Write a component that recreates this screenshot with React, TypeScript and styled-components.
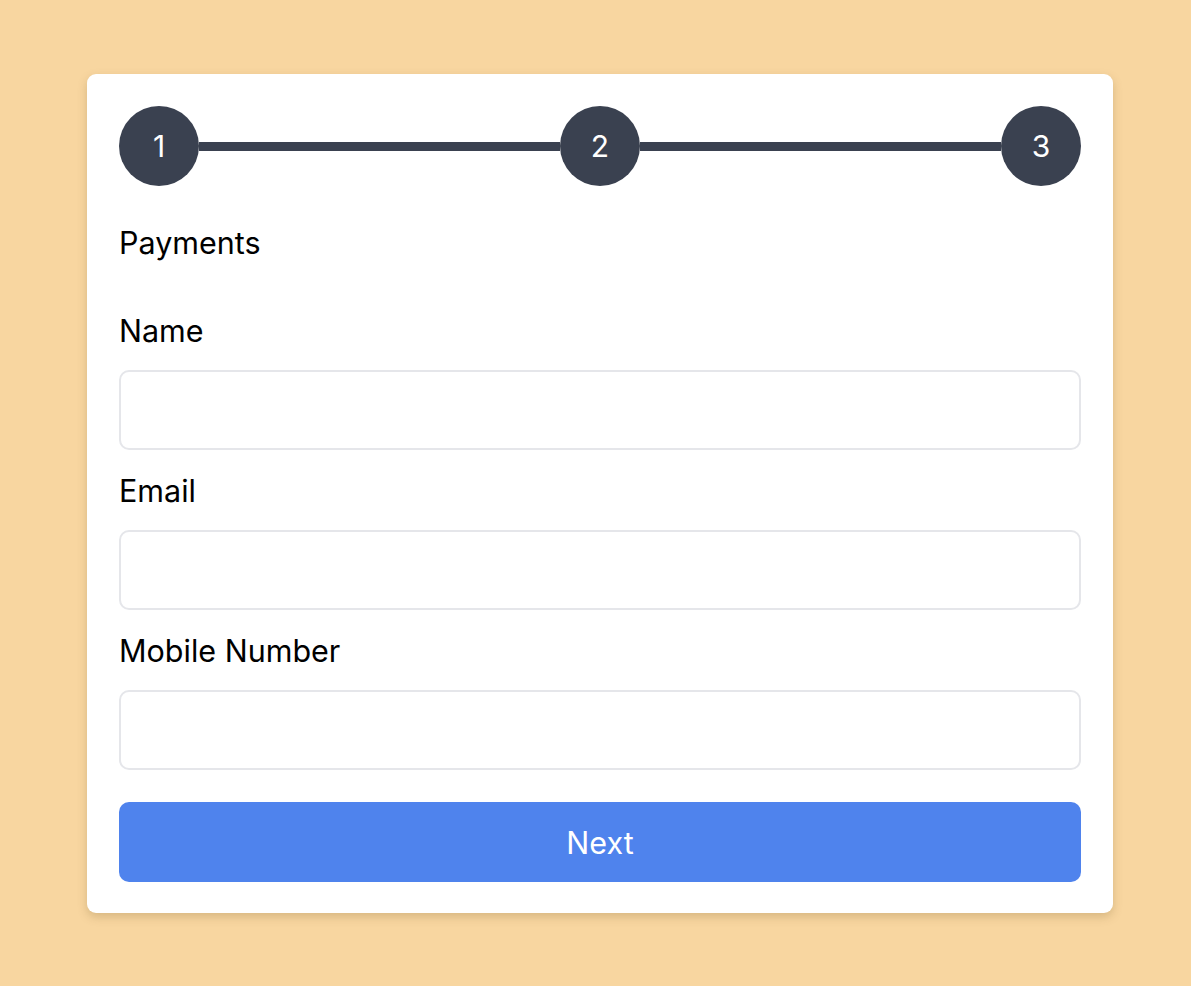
import React from "react";
import styled, { createGlobalStyle } from "styled-components";

const Global = createGlobalStyle`
  html, body {
    margin: 0;
    padding: 0;
    background: #f8d6a0;
  }
  body {
    font-family: Inter, "Noto Sans", "Liberation Sans", sans-serif;
    color: #000;
  }
`;

const Page = styled.div`
  min-height: 986px;
  padding: 74px 0 0 87px;
  box-sizing: border-box;
`;

const Card = styled.div`
  width: 1026px;
  box-sizing: border-box;
  background: #fff;
  border-radius: 9px;
  padding: 32px 32px 31px;
  box-shadow: 0 4px 10px rgba(120, 90, 40, 0.25);
  display: flex;
  flex-direction: column;
`;

const Steps = styled.div`
  display: flex;
  align-items: center;
  height: 80px;
`;

const Circle = styled.div`
  width: 80px;
  height: 80px;
  flex: none;
  border-radius: 50%;
  background: #3a4150;
  color: #fff;
  display: flex;
  align-items: center;
  justify-content: center;
  font-size: 30px;
  line-height: 1;
`;

const Bar = styled.div`
  flex: 1;
  height: 9px;
  background: #3a4150;
`;

const Title = styled.div`
  margin-top: 39px;
  font-size: 30.5px;
  line-height: 36px;
`;

const Form = styled.form`
  margin-top: 52px;
  display: flex;
  flex-direction: column;
`;

const Field = styled.div`
  display: flex;
  flex-direction: column;
  margin-bottom: 23px;
`;

const Label = styled.label`
  font-size: 30.5px;
  line-height: 36px;
  margin-bottom: 21px;
`;

const Input = styled.input`
  height: 80px;
  box-sizing: border-box;
  border: 2px solid #e5e6ea;
  border-radius: 10px;
  background: #fff;
  font-size: 24px;
  padding: 0 16px;
  outline: none;
  font-family: inherit;
`;

const Button = styled.button`
  margin-top: 9px;
  height: 80px;
  border: none;
  border-radius: 10px;
  background: #4f83ed;
  color: #fff;
  font-family: inherit;
  font-size: 30.5px;
  cursor: pointer;
`;

export default function App() {
  return (
    <>
      <Global />
      <Page>
        <Card>
          <Steps>
            <Circle>1</Circle>
            <Bar />
            <Circle>2</Circle>
            <Bar />
            <Circle>3</Circle>
          </Steps>
          <Title>Payments</Title>
          <Form onSubmit={(e) => e.preventDefault()}>
            <Field>
              <Label>Name</Label>
              <Input type="text" />
            </Field>
            <Field>
              <Label>Email</Label>
              <Input type="email" />
            </Field>
            <Field>
              <Label>Mobile Number</Label>
              <Input type="tel" />
            </Field>
            <Button type="submit">Next</Button>
          </Form>
        </Card>
      </Page>
    </>
  );
}
